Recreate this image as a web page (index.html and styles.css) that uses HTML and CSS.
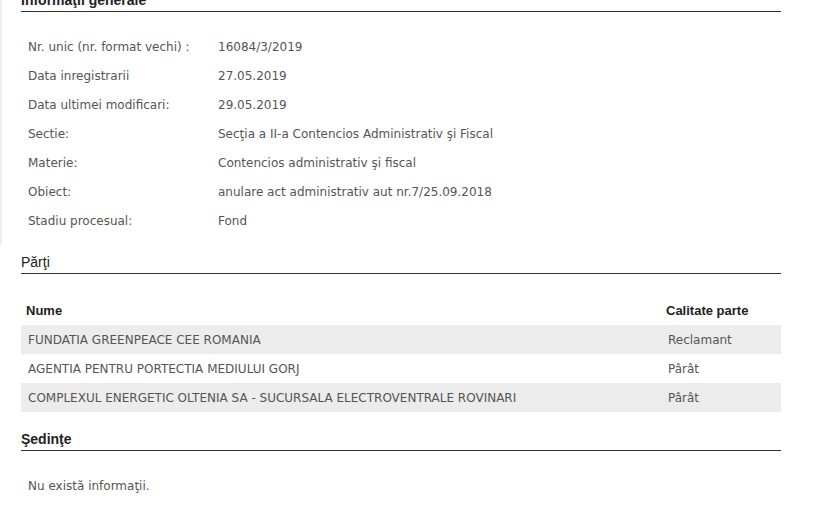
FILE: index.html
```html
<!DOCTYPE html>
<html lang="ro">
<head>
<meta charset="utf-8">
<link rel="stylesheet" href="styles.css">
</head>
<body>
<div class="page">
  <section class="section first">
    <h2 class="heading bold">Informaţii generale</h2>
    <div class="info">
      <div class="info-row"><span class="label">Nr. unic (nr. format vechi) :</span><span class="value">16084/3/2019</span></div>
      <div class="info-row"><span class="label">Data inregistrarii</span><span class="value">27.05.2019</span></div>
      <div class="info-row"><span class="label">Data ultimei modificari:</span><span class="value">29.05.2019</span></div>
      <div class="info-row"><span class="label">Sectie:</span><span class="value">Secţia a II-a Contencios Administrativ şi Fiscal</span></div>
      <div class="info-row"><span class="label">Materie:</span><span class="value">Contencios administrativ şi fiscal</span></div>
      <div class="info-row"><span class="label">Obiect:</span><span class="value">anulare act administrativ aut nr.7/25.09.2018</span></div>
      <div class="info-row"><span class="label">Stadiu procesual:</span><span class="value">Fond</span></div>
    </div>
  </section>

  <section class="section">
    <h2 class="heading">Părţi</h2>
    <table class="parties">
      <thead>
        <tr><th class="col-name">Nume</th><th class="col-role">Calitate parte</th></tr>
      </thead>
      <tbody>
        <tr class="alt"><td>FUNDATIA GREENPEACE CEE ROMANIA</td><td>Reclamant</td></tr>
        <tr><td>AGENTIA PENTRU PORTECTIA MEDIULUI GORJ</td><td>Pârât</td></tr>
        <tr class="alt"><td>COMPLEXUL ENERGETIC OLTENIA SA - SUCURSALA ELECTROVENTRALE ROVINARI</td><td>Pârât</td></tr>
      </tbody>
    </table>
  </section>

  <section class="section last">
    <h2 class="heading bold">Şedinţe</h2>
    <p class="empty">Nu există informaţii.</p>
  </section>
</div>
</body>
</html>
```

FILE: styles.css
```css
html, body {
  margin: 0;
  padding: 0;
}

body {
  font-family: "DejaVu Sans", Tahoma, Verdana, sans-serif;
  font-size: 12px;
  color: #555;
  background: #fff linear-gradient(#eeeeee, #eeeeee) no-repeat 0 0 / 2px 245px;
}

.page {
  width: 760px;
  margin-left: 21px;
  margin-top: -8px;
}

.heading {
  font-family: "Liberation Sans", Arial, sans-serif;
  font-size: 14px;
  font-weight: normal;
  line-height: 16px;
  color: #222;
  margin: 0;
  padding: 0 0 3px 0;
  border-bottom: 1px solid #333;
}

.heading.bold {
  font-weight: bold;
}

.section + .section {
  margin-top: 19px;
}

.section.last {
  margin-top: 19px;
}

.info {
  padding-top: 20px;
  display: flex;
  flex-direction: column;
}

.info-row {
  display: grid;
  grid-template-columns: 197px 1fr;
  height: 29px;
  align-items: center;
}

.label {
  padding-left: 7px;
}

.parties {
  width: 760px;
  border-collapse: collapse;
  margin-top: 22px;
}

.parties th {
  font-family: "Liberation Sans", Arial, sans-serif;
  font-size: 13px;
  font-weight: bold;
  color: #222;
  text-align: left;
  height: 29px;
  padding: 0 0 0 5px;
}

.parties .col-name {
  width: 635px;
}

.parties td {
  height: 29px;
  padding: 0 0 0 7px;
  vertical-align: middle;
}

.parties tr.alt td {
  background: #ececec;
}

.empty {
  margin: 21px 0 0 0;
  padding-left: 7px;
  height: 29px;
  line-height: 29px;
}
```
